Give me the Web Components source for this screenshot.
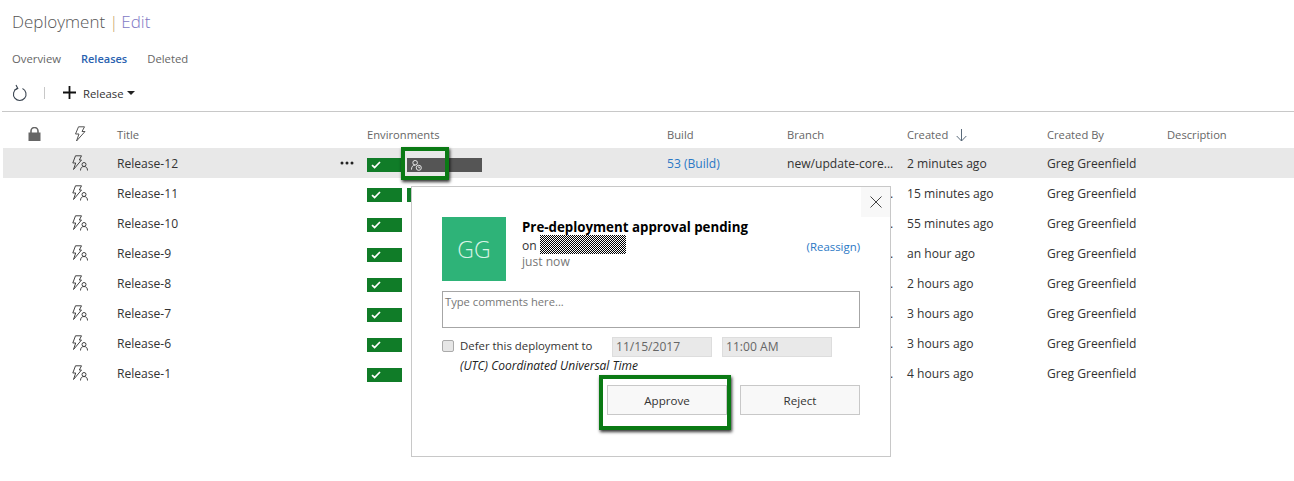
<!DOCTYPE html>
<html lang="en">
<head>
<meta charset="utf-8">
<title>Deployment | Edit</title>
<style>
    html, body{
        margin: 0;
        background: #fff;
    }
    body{
        font-family: "Open Sans", "Liberation Sans", sans-serif;
        font-size: 12.1px;
        color: #333;
    }
</style>
</head>
<body>
<deploy-page></deploy-page>

<script>
const icons = {
    refresh: `<svg width="16" height="18" viewBox="0 0 16 18" fill="none" stroke="#3a4450" stroke-width="1.1"><path d="M10.500 4.500A6.300 6.300 0 1 1 5 4.500"/><path d="M4 1l1.800 3.500L2.500 6"/></svg>`,
    plus: `<svg width="13" height="13" viewBox="0 0 13 13" fill="#111"><path d="M5.600 0h1.800v5.600H13v1.800H7.400V13H5.600V7.400H0V5.600h5.600z"/></svg>`,
    lock: `<svg width="13" height="14" viewBox="0 0 13 14"><path d="M3 6V4a3.500 3.500 0 0 1 7 0v2" fill="none" stroke="#666" stroke-width="1.600"/><rect x="0.500" y="5.500" width="12" height="8.500" fill="#666"/></svg>`,
    bolt: `<svg width="12" height="16" viewBox="0 0 12 16" fill="none" stroke="#555" stroke-width="1"><path d="M4.500 .8h6L8 5.500h3L2.500 15 5 8H1.500z"/></svg>`,
    boltUser: `<svg width="16" height="16" viewBox="0 0 16 16" fill="none" stroke="#444" stroke-width="1"><path d="M3.500 .8h6L7.300 5h2.200L1.500 14.500 3.700 8H.8z"/><circle cx="12" cy="9.500" r="2"/><path d="M8.500 15.500c0-2.500 1.200-4 3.500-4s3.500 1.500 3.500 4"/></svg>`,
    check: `<svg width="10" height="8" viewBox="0 0 10 8" fill="none" stroke="#fff" stroke-width="1.700"><path d="M1 4.200l2.600 2.300L9 1"/></svg>`,
    userClock: `<svg width="11" height="11" viewBox="0 0 12 12" fill="none" stroke="#f2f2f2" stroke-width="1"><circle cx="4.500" cy="3" r="2.500"/><path d="M.5 10.500c0-3 1.500-5 4-5"/><circle cx="8.500" cy="8.500" r="2.800"/><path d="M8.500 7v1.500h1.500"/></svg>`,
    dots: `<svg width="14" height="4" viewBox="0 0 14 4" fill="#222"><circle cx="2" cy="2" r="1.500"/><circle cx="7" cy="2" r="1.500"/><circle cx="12" cy="2" r="1.500"/></svg>`,
    close: `<svg width="12" height="12" viewBox="0 0 12 12" fill="none" stroke="#444" stroke-width="1"><path d="M.5 .5l11 11M11.500 .5l-11 11"/></svg>`,
    down: `<svg width="11" height="13" viewBox="0 0 11 13" fill="none" stroke="#5a6a7a" stroke-width="1"><path d="M5.500 0v12M.7 7l4.800 5 4.800-5"/></svg>`,
    mask: `<svg width="86" height="19"><defs><pattern id="chk" width="2" height="2" patternUnits="userSpaceOnUse"><rect width="2" height="2" fill="#fff"/><rect width="1" height="1" fill="#000"/><rect x="1" y="1" width="1" height="1" fill="#000"/></pattern></defs><rect width="86" height="19" fill="url(#chk)" shape-rendering="crispEdges"/></svg>`
}

class DeployHeader extends HTMLElement{
    constructor(){
        super()
        this.attachShadow({mode: 'open'}).innerHTML = `<style>
                :host{
                    display: flex;
                    align-items: center;
                    height: 42px;
                    padding: 0 0 2px 12px;
                    font-size: 17px;
                    font-weight: 300;
                    color: #555;
                }
                span{ color: #7e78c4; }
                i{ font-style: normal; color: #c9a36a; margin: 0 3px 0 4px; }
            </style>
            <slot></slot><i>|</i><span>Edit</span>`
    }
}

class DeployTabs extends HTMLElement{
    constructor(){
        super()
        this.attachShadow({mode: 'open'}).innerHTML = `<style>
                :host{
                    display: flex;
                    align-items: center;
                    gap: 20px;
                    height: 30px;
                    padding: 0 0 1px 12px;
                    box-sizing: border-box;
                    font-size: 11.300px;
                    color: #666;
                }
                b{ font-weight: 600; font-size: 11px; color: #2a62b0; }
            </style>
            <span>Overview</span><b>Releases</b><span>Deleted</span>`
    }
}

class DeployToolbar extends HTMLElement{
    constructor(){
        super()
        this.attachShadow({mode: 'open'}).innerHTML = `<style>
                :host{
                    display: flex;
                    align-items: center;
                    height: 37px;
                    margin-left: 2px;
                    padding-left: 10px;
                    border-bottom: 1px solid #c8c8c8;
                    font-size: 11.300px;
                }
                .sep{
                    width: 1px;
                    height: 12px;
                    background: #c8c8c8;
                    margin: 0 18px 0 16px;
                }
                .label{ margin: 2px 0 0 7px; }
                .caret{
                    width: 0;
                    height: 0;
                    margin-left: 3px;
                    border: 4px solid transparent;
                    border-top: 4px solid #222;
                    border-bottom: 0;
                }
                svg{ display: block; }
            </style>
            ${icons.refresh}<div class="sep"></div>${icons.plus}
            <span class="label">Release</span><span class="caret"></span>`
    }
}

const columns = '46px 43px 250px 300px 120px 120px 140px 120px 1fr'

class ReleaseHead extends HTMLElement{
    constructor(){
        super()
        this.attachShadow({mode: 'open'}).innerHTML = `<style>
                :host{
                    display: grid;
                    grid-template-columns: ${columns};
                    align-items: center;
                    height: 26px;
                    padding: 10px 0 0 25px;
                    font-size: 11.200px;
                    line-height: 14px;
                    color: #666;
                }
                svg{ display: block; }
                .sort{ display: flex; align-items: center; gap: 8px; }
                .icon{ margin-top: -2px; }
            </style>
            <span class="icon">${icons.lock}</span><span class="icon">${icons.bolt}</span><span>Title</span>
            <span>Environments</span><span>Build</span><span>Branch</span>
            <span class="sort">Created ${icons.down}</span><span>Created By</span><span>Description</span>`
    }
}

class ReleaseRow extends HTMLElement{
    constructor(){
        super()
        const second = this.getAttribute('second')
        const build = this.getAttribute('build')
        this.attachShadow({mode: 'open'}).innerHTML = `<style>
                :host{
                    display: grid;
                    grid-template-columns: ${columns};
                    align-items: center;
                    height: 30px;
                    padding-left: 25px;
                }
                :host([selected]){ background: #e8e8e8; }
                svg{ display: block; }
                .title{
                    display: flex;
                    justify-content: space-between;
                    align-items: center;
                    padding-right: 13px;
                }
                .envs{
                    display: flex;
                    gap: 5px;
                    margin-top: 4px;
                }
                .env{
                    display: flex;
                    align-items: center;
                    height: 14px;
                    padding-left: 4px;
                    box-sizing: border-box;
                }
                .ok{ width: 35px; background: #107c28; }
                .wait{ width: 75px; background: #555; position: relative; }
                .next{ width: 75px; background: #107c28; }
                .branch{ white-space: nowrap; }
                a{ color: #2b78c5; }
            </style>
            <span></span><span style="margin-left:-2px">${icons.boltUser}</span>
            <div class="title"><slot></slot>${second === 'wait' ? icons.dots : ''}</div>
            <div class="envs">
                <div class="env ok">${icons.check}</div>
                ${second === 'wait' ? `<div class="env wait">${icons.userClock}<hl-box style="--l:-6px;--t:-11px;--w:48px;--h:33px"></hl-box></div>` : ''}
                ${second === 'next' ? `<div class="env next"></div>` : ''}
            </div>
            <a>${build ? build : ''}</a>
            <span class="branch">new/update-core...</span>
            <span>${this.getAttribute('created')}</span>
            <span>Greg Greenfield</span>
            <span></span>`
    }
}

// cadre vert par dessus l'element a mettre en avant
class HlBox extends HTMLElement{
    constructor(){
        super()
        this.attachShadow({mode: 'open'}).innerHTML = `<style>
                :host{
                    position: absolute;
                    left: var(--l);
                    top: var(--t);
                    width: var(--w);
                    height: var(--h);
                    box-sizing: border-box;
                    border: 4px solid #0a7a14;
                    box-shadow: 1px 2px 3px rgba(0,0,0,.8);
                    z-index: 5;
                    pointer-events: none;
                }
            </style>`
    }
}

class ApprovalPopup extends HTMLElement{
    constructor(){
        super()
        this.attachShadow({mode: 'open'}).innerHTML = `<style>
                :host{
                    position: absolute;
                    left: 411px;
                    top: 186px;
                    width: 480px;
                    height: 271px;
                    box-sizing: border-box;
                    padding: 30px 30px 0;
                    background: #fff;
                    border: 1px solid #c8c8c8;
                    z-index: 2;
                }
                svg{ display: block; }
                .close{
                    position: absolute;
                    right: 0;
                    top: 0;
                    width: 29px;
                    height: 30px;
                    display: flex;
                    align-items: center;
                    justify-content: center;
                    background: #f8f8f8;
                }
                .top{
                    display: grid;
                    grid-template-columns: 64px 1fr auto;
                    column-gap: 16px;
                    height: 64px;
                }
                .avatar{
                    height: 64px;
                    display: flex;
                    align-items: center;
                    justify-content: center;
                    background: #2eb378;
                    color: #d8f3e6;
                    font-size: 23px;
                    font-weight: 300;
                }
                .who{
                    display: flex;
                    flex-direction: column;
                    padding-top: 1px;
                }
                h2{
                    margin: 0;
                    font-size: 13.300px;
                    line-height: 18px;
                    font-weight: 700;
                    color: #000;
                }
                .on{
                    display: flex;
                    align-items: center;
                    gap: 3px;
                    height: 19px;
                    color: #333;
                }
                .mask{ margin-top: -3px; }
                .ago{ color: #777; line-height: 15px; margin-top: -1px; }
                .reassign{ color: #2b78c5; font-size: 11.400px; align-self: center; margin-top: -6px; }
                .comments{
                    height: 37px;
                    box-sizing: border-box;
                    margin-top: 10px;
                    padding: 2px 2px;
                    border: 1px solid #a6a6a6;
                    font-size: 11.200px;
                    color: #777;
                }
                .defer{
                    display: flex;
                    align-items: center;
                    margin-top: 9px;
                    height: 20px;
                }
                .box{
                    width: 12px;
                    height: 12px;
                    box-sizing: border-box;
                    margin: -2px 6px 0 0;
                    border: 1px solid #aaa;
                    border-radius: 2px;
                    background: #e6e6e6;
                }
                .label{
                    width: 152px;
                    margin-top: -4px;
                    font-size: 11.400px;
                }
                .field{
                    height: 20px;
                    box-sizing: border-box;
                    padding-left: 3px;
                    line-height: 18px;
                    background: #e9e9e9;
                    border: 1px solid #ddd;
                    color: #666;
                }
                .zone{
                    margin: 0 0 0 18px;
                    line-height: 18px;
                    font-style: italic;
                    font-size: 12px;
                    color: #222;
                }
                .actions{
                    display: flex;
                    justify-content: flex-end;
                    gap: 13px;
                    margin-top: 10px;
                }
                .btn{
                    position: relative;
                    width: 120px;
                    height: 30px;
                    box-sizing: border-box;
                    display: flex;
                    align-items: center;
                    justify-content: center;
                    background: #f8f8f8;
                    border: 1px solid #c8c8c8;
                    font-size: 11.600px;
                    color: #333;
                }
            </style>
            <div class="close">${icons.close}</div>
            <div class="top">
                <div class="avatar">GG</div>
                <div class="who">
                    <h2>Pre-deployment approval pending</h2>
                    <div class="on">on <div class="mask">${icons.mask}</div></div>
                    <div class="ago">just now</div>
                </div>
                <div class="reassign">(Reassign)</div>
            </div>
            <div class="comments">Type comments here...</div>
            <div class="defer">
                <div class="box"></div>
                <span class="label">Defer this deployment to</span>
                <div class="field" style="width:100px">11/15/2017</div>
                <div class="field" style="width:110px;margin-left:10px">11:00 AM</div>
            </div>
            <p class="zone">(UTC) Coordinated Universal Time</p>
            <div class="actions">
                <div class="btn">Approve<hl-box style="--l:-9px;--t:-11px;--w:132px;--h:55px"></hl-box></div>
                <div class="btn">Reject</div>
            </div>`
    }
}

class DeployPage extends HTMLElement{
    constructor(){
        super()
        const rows = [
            ['Release-12', '2 minutes ago', 'wait', '53 (Build)'],
            ['Release-11', '15 minutes ago', 'next'],
            ['Release-10', '55 minutes ago'],
            ['Release-9', 'an hour ago'],
            ['Release-8', '2 hours ago'],
            ['Release-7', '3 hours ago'],
            ['Release-6', '3 hours ago'],
            ['Release-1', '4 hours ago']
        ]
        this.attachShadow({mode: 'open'}).innerHTML = `<style>
                :host{
                    display: block;
                    position: relative;
                    min-height: 481px;
                }
                .table{ margin-left: 3px; }
            </style>
            <deploy-header>Deployment</deploy-header>
            <deploy-tabs></deploy-tabs>
            <deploy-toolbar></deploy-toolbar>
            <div class="table">
                <release-head></release-head>
                ${rows.map((r, i) => `<release-row ${i === 0 ? 'selected' : ''} created="${r[1]}" second="${r[2] || ''}" build="${r[3] || ''}">${r[0]}</release-row>`).join('')}
            </div>
            <approval-popup></approval-popup>`
    }
}

customElements.define('deploy-header', DeployHeader)
customElements.define('deploy-tabs', DeployTabs)
customElements.define('deploy-toolbar', DeployToolbar)
customElements.define('release-head', ReleaseHead)
customElements.define('hl-box', HlBox)
customElements.define('release-row', ReleaseRow)
customElements.define('approval-popup', ApprovalPopup)
customElements.define('deploy-page', DeployPage)
</script>
</body>
</html>
